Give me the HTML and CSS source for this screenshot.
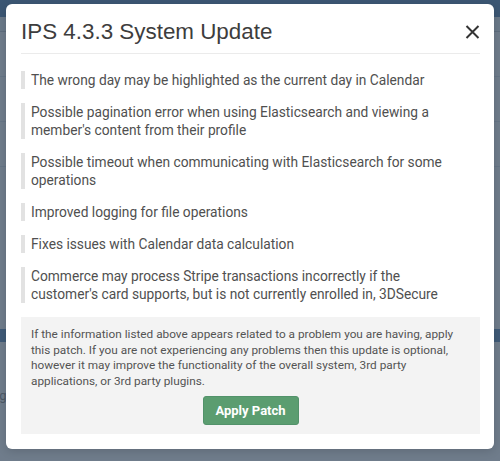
FILE: index.html
```html
<!DOCTYPE html>
<html lang="en">
<head>
<meta charset="utf-8">
<title>IPS 4.3.3 System Update</title>
<link rel="stylesheet" href="styles.css">
</head>
<body>
<div class="backdrop">
  <div class="bg-header"></div>
  <div class="bg-nav"><span class="bg-menu"></span></div>
  <div class="bg-body">
    <div class="bg-row"></div>
    <div class="bg-row"></div>
    <div class="bg-row"></div>
    <div class="bg-band"></div>
    <div class="bg-text">Loading</div>
  </div>
</div>

<div class="modal" role="dialog">
  <div class="modal-header">
    <h1 class="modal-title">IPS 4.3.3 System Update</h1>
    <button class="close" aria-label="Close">
      <svg width="15" height="14" viewBox="0 0 15 14"><path d="M1.5 1 L13.5 13 M13.5 1 L1.5 13" stroke="#333" stroke-width="2" fill="none"/></svg>
    </button>
  </div>
  <ul class="changes">
    <li>The wrong day may be highlighted as the current day in Calendar</li>
    <li>Possible pagination error when using Elasticsearch and viewing a member's content from their profile</li>
    <li>Possible timeout when communicating with Elasticsearch for some operations</li>
    <li>Improved logging for file operations</li>
    <li>Fixes issues with Calendar data calculation</li>
    <li>Commerce may process Stripe transactions incorrectly if the customer's card supports, but is not currently enrolled in, 3DSecure</li>
  </ul>
  <div class="info">
    <p>If the information listed above appears related to a problem you are having, apply this patch. If you are not experiencing any problems then this update is optional, however it may improve the functionality of the overall system, 3rd party applications, or 3rd party plugins.</p>
    <div class="actions"><button class="apply">Apply Patch</button></div>
  </div>
</div>
</body>
</html>
```
FILE: styles.css
```css
* { box-sizing: border-box; }
html, body { margin: 0; padding: 0; }
body {
  width: 500px;
  height: 461px;
  overflow: hidden;
  background: #6f7c8b;
  font-family: Roboto, "Liberation Sans", sans-serif;
  position: relative;
}
.backdrop { display: flex; flex-direction: column; height: 100%; }
.bg-header { height: 17px; background: #3c5774; }
.bg-nav { height: 15px; background: #6a7989; border-bottom: 1px solid #5e6d7d; }
.bg-body { flex: 1; display: flex; flex-direction: column; }
.bg-row { height: 45px; border-bottom: 1px solid #667586; }
.bg-band { height: 13px; margin-top: 162px; background: #3f5a77; }
.bg-text { margin-top: 46px; font-size: 13px; color: #4d5966; line-height: 16px; margin-left: -40px; }

.modal {
  position: absolute;
  left: 6px;
  top: 4px;
  width: 488px;
  background: #fff;
  border-radius: 6px;
  padding: 0 14px 15px 15px;
  box-shadow: 0 2px 10px rgba(0,0,0,0.15);
}
.modal-header {
  height: 50px;
  display: flex;
  align-items: center;
  justify-content: space-between;
  border-bottom: 1px solid #ebebeb;
}
.modal-title {
  margin: 0;
  font-family: "Liberation Sans", Arial, sans-serif;
  font-weight: normal;
  font-size: 22.4px;
  color: #3d3d3d;
  padding-top: 6px;
}
.close {
  border: 0;
  background: none;
  padding: 0;
  margin-top: 6px;
  width: 15px;
  height: 14px;
  display: flex;
}
.changes {
  list-style: none;
  margin: 17px 0 0;
  padding: 0 14px 0 0;
  display: flex;
  flex-direction: column;
  gap: 14px;
}
.changes li {
  border-left: 4px solid #e2e2e2;
  padding-left: 6px;
  font-size: 13.75px;
  line-height: 18px;
  color: #505050;
}
.info {
  margin-top: 14px;
  background: #f3f3f3;
  padding: 10px 10px 9px;
}
.info p {
  margin: 0;
  font-size: 11.8px;
  line-height: 15.5px;
  color: #545454;
}
.actions {
  display: flex;
  justify-content: center;
  margin-top: 7px;
}
.apply {
  height: 29px;
  width: 96px;
  border: 1px solid #52926a;
  border-radius: 3px;
  background: #5b9d70;
  color: #fff;
  font-family: Roboto, "Liberation Sans", sans-serif;
  font-weight: bold;
  font-size: 13px;
  padding: 0;
}
```
